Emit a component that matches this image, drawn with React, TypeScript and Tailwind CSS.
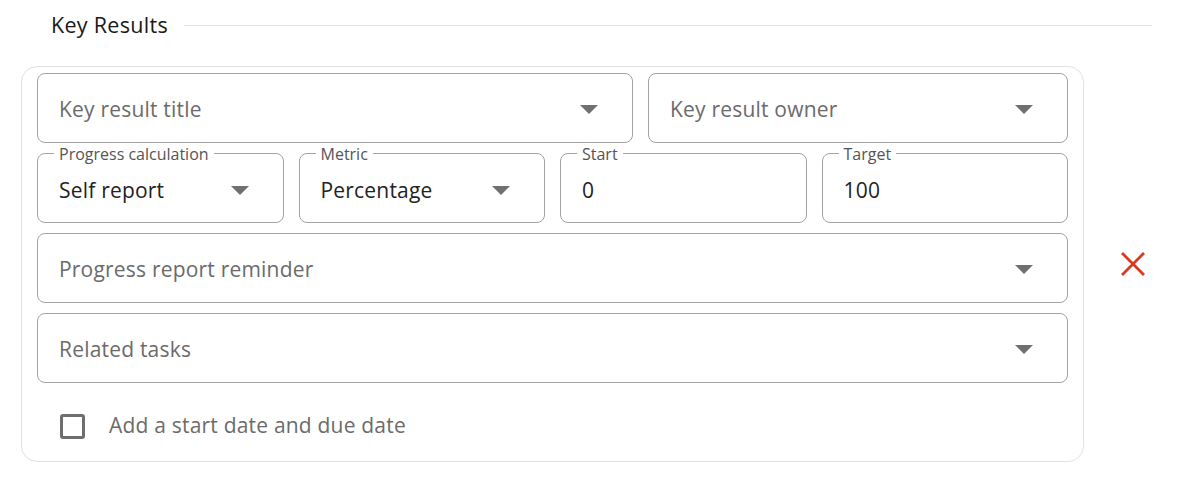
import React from "react";

function Caret() {
  return (
    <svg width="18" height="9" viewBox="0 0 18 9" className="shrink-0">
      <path d="M0 0 L18 0 L9 9 Z" fill="#707070" />
    </svg>
  );
}

function SelectBox({ placeholder, className = "" }: { placeholder: string; className?: string }) {
  return (
    <div className={`h-[70px] border border-[#a3a3a3] rounded-[8px] flex items-center pt-[3px] pl-[21px] pr-[34px] ${className}`}>
      <span className="flex-1 text-[21px] tracking-[0.2px] text-[#6b6b6b]">{placeholder}</span>
      <Caret />
    </div>
  );
}

function LabeledField({ label, value, caret }: { label: string; value: string; caret?: boolean }) {
  return (
    <div className="relative flex-1 h-[70px] border border-[#a3a3a3] rounded-[8px] flex items-center pt-[5px] pl-[21px] pr-[34px]">
      <span className="absolute -top-[9px] left-[16px] bg-white px-[5px] text-[16px] leading-[18px] text-[#555]">{label}</span>
      <span className="flex-1 text-[21px] tracking-[0.2px] text-[#222]">{value}</span>
      {caret && <Caret />}
    </div>
  );
}

export default function App() {
  return (
    <div className="w-[1186px] h-[490px] bg-white font-['Open_Sans',sans-serif] pt-[10px]">
      <div className="flex items-center h-[30px] pl-[51px] pr-[34px]">
        <span className="text-[21.5px] tracking-[0.3px] text-[#1a1a1a]">Key Results</span>
        <div className="flex-1 h-px bg-[#e3e3e3] ml-[16px]" />
      </div>
      <div className="flex items-center mt-[26px] pl-[21px]">
        <div className="w-[1063px] border border-[#e2e2e2] rounded-[16px] px-[15px] pt-[6px] pb-[20px] flex flex-col gap-[10px]">
          <div className="flex gap-[15px]">
            <SelectBox placeholder="Key result title" className="w-[596px]" />
            <SelectBox placeholder="Key result owner" className="flex-1" />
          </div>
          <div className="flex gap-[15px]">
            <LabeledField label="Progress calculation" value="Self report" caret />
            <LabeledField label="Metric" value="Percentage" caret />
            <LabeledField label="Start" value="0" />
            <LabeledField label="Target" value="100" />
          </div>
          <SelectBox placeholder="Progress report reminder" />
          <SelectBox placeholder="Related tasks" />
          <label className="flex items-center h-[30px] gap-[24px] pl-[23px] mt-[18px]">
            <span className="w-[25px] h-[25px] border-[3px] border-[#6e6e6e] rounded-[3px]" />
            <span className="text-[21px] tracking-[0.2px] text-[#6b6b6b]">Add a start date and due date</span>
          </label>
        </div>
        <svg width="24" height="24" viewBox="0 0 24 24" className="ml-[37px]">
          <path d="M2 2 L22 22 M22 2 L2 22" stroke="#d93a1f" strokeWidth="2.8" strokeLinecap="square" />
        </svg>
      </div>
    </div>
  );
}
